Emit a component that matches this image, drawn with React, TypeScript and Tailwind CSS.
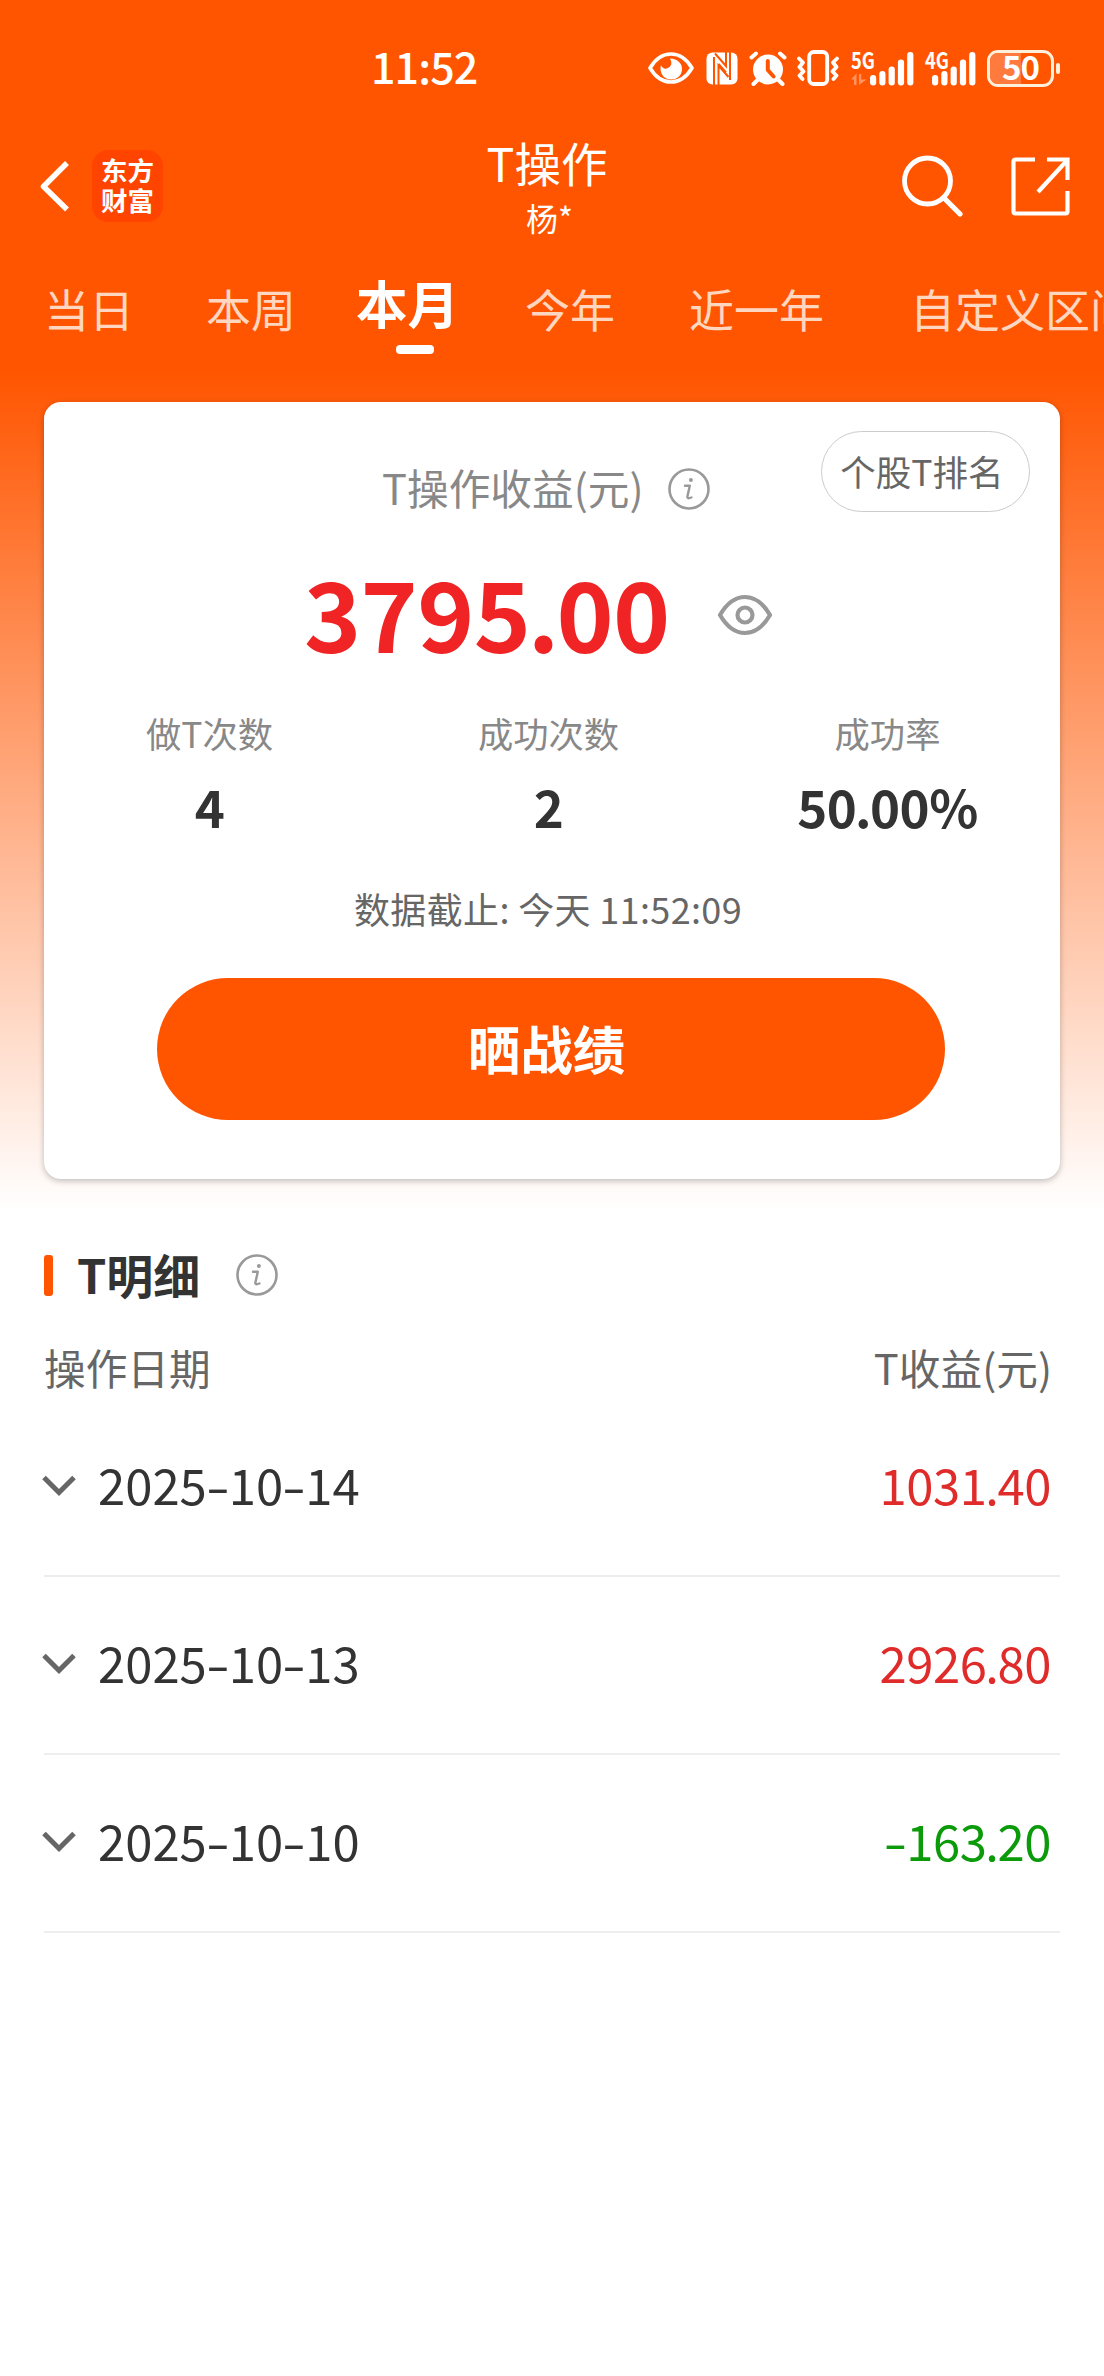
import React from "react";

const tabs = [
  { label: "当日", cls: "ml-[44px]" },
  { label: "本周", cls: "ml-[72px]" },
  { label: "本月", cls: "ml-[60px]", active: true },
  { label: "今年", cls: "ml-[66px]" },
  { label: "近一年", cls: "ml-[74px]" },
  { label: "自定义区间", cls: "ml-[86px]" },
];

const stats = [
  { label: "做T次数", value: "4" },
  { label: "成功次数", value: "2" },
  { label: "成功率", value: "50.00%" },
];

const records = [
  { date: "2025-10-14", amount: "1031.40" },
  { date: "2025-10-13", amount: "2926.80" },
  { date: "2025-10-10", amount: "-163.20" },
];

/* Digits with a widened hyphen and a tightened decimal point */
function Figures({ text }: { text: string }) {
  return (
    <>
      {text.split("").map((ch, i) =>
        ch === "-" ? (
          <span key={i} className="inline-block w-[22px] origin-center scale-x-[1.4] text-center">
            -
          </span>
        ) : ch === "." ? (
          <span key={i} className="mr-[-0.022em] ml-[-0.026em]">
            .
          </span>
        ) : (
          <React.Fragment key={i}>{ch}</React.Fragment>
        )
      )}
    </>
  );
}

function InfoIcon({ className }: { className: string }) {
  return (
    <svg className={className} width="42" height="42" viewBox="0 0 42 42" fill="none" stroke="#999" strokeLinecap="round" strokeLinejoin="round">
      <circle cx="21" cy="21" r="19.5" strokeWidth="2.6" />
      <path d="M17 17.800h4.800l-2.400 10.700c-.4 1.800.8 2.200 4 1" strokeWidth="2.4" />
      <circle cx="22.9" cy="12" r="2" fill="#999" stroke="none" />
    </svg>
  );
}

function Signal({ label, first, data }: { label: string; first: number; data?: boolean }) {
  const tops = [24, 20, 15.5, 8.5, 1];
  return (
    <svg className="overflow-visible" width={first + 44} height="35" viewBox={`0 0 ${first + 44} 35`} fill="#fff">
      <text x="0" y="17.500" fontSize="23" fontWeight="700" textLength="24" lengthAdjust="spacingAndGlyphs" fontFamily="Noto Sans CJK SC, sans-serif">
        {label}
      </text>
      {data && <path d="M0 28.500 5.500 22.500V34H3v-5.500zM8 23h2.300v5.500H15.500L8 34z" fill="#ff9460" />}
      {tops.map((t, i) => (
        <rect key={i} x={first + i * 9.3} y={t} width="6.2" height={34.5 - t} rx="3" />
      ))}
    </svg>
  );
}

function StatusBar() {
  return (
    <div className="flex h-[134px] items-start text-white">
      <div className="ml-[371px] mt-[35px] w-[112px] text-[43px] leading-[60px] font-medium tracking-[-0.9px]">11:52</div>
      <div className="ml-[165px] mt-[50px] flex h-[36px] items-center">
        <svg width="46" height="32" viewBox="0 0 46 32" fill="none">
          <path d="M2 16C8 6 15 2 23 2s15 4 21 14c-6 10-13 14-21 14S8 26 2 16Z" stroke="#fff" strokeWidth="3.6" strokeLinejoin="round" />
          <path d="M22 6.500C30 7 34 11.500 34 17c0 6-4.500 10.500-10.700 10.500C17 27.500 12.500 23 12.500 16.500c0-1.300.2-2.200.5-3.200 1.500 3.200 4 4.200 6.400 3C23.500 14.500 24.500 11 22 6.500Z" fill="#fff" />
        </svg>
        <svg className="ml-[12px]" width="32" height="33" viewBox="0 0 32 33">
          <rect x="0.500" y="0.500" width="31" height="32" rx="6" fill="#fff" />
          <g fill="none" stroke="#ff5500" strokeWidth="2">
            <path d="M8 33V5" />
            <path d="M24 0v28" />
            <path d="M9 1.500 20 14V0" />
            <path d="M12.500 33V13.500L22.500 25" />
            <path d="M12.500 12 20 20.500" />
          </g>
        </svg>
        <svg className="ml-[11px]" width="38" height="35" viewBox="0 0 38 35" fill="none" stroke="#fff" strokeLinecap="round">
          <circle cx="19" cy="18.500" r="15" fill="#fff" stroke="none" />
          <path d="M2.500 6.500 7 2.500M35.500 6.500 31 2.500" strokeWidth="4" />
          <path d="m8.500 29-4 4M29.500 29l4 4" strokeWidth="4" />
          <path d="M18.800 10v9l5.800 6.500" stroke="#ff5500" strokeWidth="4" strokeLinejoin="round" />
        </svg>
        <svg className="ml-[10px]" width="42" height="36" viewBox="0 0 42 36" fill="none" stroke="#fff" strokeWidth="3.800">
          <rect x="12.200" y="2" width="18" height="32" rx="4.500" />
          <path d="m2 8.500 4 4L2.500 17l4 4.500-4 4 3 3.500" strokeLinejoin="round" strokeLinecap="round" />
          <path d="m40 8.500-4 4 3.500 4.500-4 4.500 4 4-3 3.500" strokeLinejoin="round" strokeLinecap="round" />
        </svg>
        <span className="ml-[12px]">
          <Signal label="5G" first={19} data />
        </span>
        <span className="ml-[11px]">
          <Signal label="4G" first={7} />
        </span>
        <div className="relative ml-[11px] flex h-[37px] w-[67px] items-center justify-center rounded-[11px] border-[3px] border-[#fff0dc]">
          <div className="absolute inset-y-0 left-0 w-1/2 rounded-l-[8px] bg-[#ff7a3d]" />
          <span className="relative mt-[-4px] text-[33px] leading-[36px] font-bold tracking-[-1px]">50</span>
        </div>
        <div className="ml-[2px] h-[11px] w-[4px] rounded-[2px] bg-[#fff0dc]" />
      </div>
    </div>
  );
}

function Header() {
  return (
    <div className="flex h-[104px] items-center text-white">
      <svg className="ml-[39px]" width="31" height="52" viewBox="0 0 31 52" fill="none" stroke="#fff" strokeWidth="5.500">
        <path d="M28 3 4.500 26.500 28 49.500" strokeLinejoin="round" />
      </svg>
      <div className="ml-[22px] h-[72px] w-[71px] rounded-[16px] bg-[#ff4400] px-[9px] pt-[5px] text-[26.500px] leading-[30px] font-bold break-all">
        东方财富
      </div>
      <div className="ml-[264px] w-[240px] self-start text-center">
        <div className="text-[46.5px] leading-[56px]">T操作</div>
        <div className="mt-[5px] ml-[5px] text-[32px] leading-[44px]">杨*</div>
      </div>
      <svg className="ml-[234px]" width="62" height="62" viewBox="0 0 62 62" fill="none" stroke="#fff">
        <circle cx="26.500" cy="26" r="23" strokeWidth="4.800" />
        <path d="M42.500 42.500 59 59" strokeWidth="5.200" strokeLinecap="round" />
      </svg>
      <svg className="ml-[47px]" width="60" height="60" viewBox="0 0 60 60" fill="none" stroke="#fff" strokeWidth="4.200">
        <path d="M25 3.500H5.500a2 2 0 0 0-2 2v50a2 2 0 0 0 2 2h50a2 2 0 0 0 2-2V35" />
        <path d="M37 3.500h20.500V24" />
        <path d="M56.500 5 28 36" />
      </svg>
    </div>
  );
}

function Tabs() {
  return (
    <div className="flex h-[164px] items-start overflow-hidden whitespace-nowrap">
      {tabs.map((t) =>
        t.active ? (
          <div key={t.label} className={`${t.cls} mt-[34px] flex shrink-0 flex-col items-center text-[51.5px] leading-[60px] font-bold text-white`}>
            {t.label}
            <div className="ml-[14px] mt-[13px] h-[9px] w-[38px] rounded-[4px] bg-white" />
          </div>
        ) : (
          <div key={t.label} className={`${t.cls} mt-[41px] shrink-0 text-[45px] leading-[60px] text-[#ffd6c0]`}>
            {t.label}
          </div>
        )
      )}
    </div>
  );
}

function SummaryCard() {
  return (
    <section className="relative mx-[44px] flex h-[777px] flex-col rounded-[17px] bg-white pt-[55px] shadow-[0_2px_6px_rgba(0,0,0,0.25)]">
      <button className="absolute top-[29px] right-[30px] flex h-[81px] w-[209px] justify-center rounded-full border-[1.5px] border-[#ccc] pr-[7px] text-[35.5px] leading-[77px] text-[#666]">
        个股T排名
      </button>
      <div className="ml-[338px] flex items-center text-[41.7px] leading-[60px] text-[#888]">
        T操作收益(元)
        <InfoIcon className="ml-[24px] mt-[4px]" />
      </div>
      <div className="ml-[260px] mt-[44px] flex items-center">
        <span className="w-[365px] text-[97px] leading-[100px] font-bold tracking-[-0.007em] text-[#f02424]">
          <Figures text="3795.00" />
        </span>
        <svg className="ml-[48px] mt-[8px]" width="56" height="42" viewBox="0 0 56 42" fill="none" stroke="#999" strokeWidth="4.200">
          <path d="M3 21C10 9 18 3 28 3s18 6 25 18c-7 12-15 18-25 18S10 33 3 21Z" strokeLinejoin="round" />
          <circle cx="28" cy="21" r="7.500" />
        </svg>
      </div>
      <div className="mr-[3px] mt-[47px] ml-[-4px] grid grid-cols-3 text-center">
        {stats.map((s) => (
          <div key={s.label}>
            <div className="text-[35.3px] leading-[50px] text-[#888]">{s.label}</div>
            <div className="mt-[18px] text-[51px] leading-[60px] font-bold tracking-[-0.01em] text-[#333]">
              <Figures text={s.value} />
            </div>
          </div>
        ))}
      </div>
      <div className="mt-[47px] pr-[8px] text-center text-[36px] leading-[50px] tracking-[0.35px] text-[#666]">数据截止: 今天 11:52:09</div>
      <button className="ml-[113px] mt-[45px] h-[142px] w-[788px] rounded-full bg-[#ff5500] pr-[9px] pb-[4px] text-[52.500px] font-bold text-white">
        晒战绩
      </button>
    </section>
  );
}

function Details() {
  return (
    <section className="mx-[44px] mt-[66px]">
      <div className="flex h-[60px] items-center">
        <div className="h-[41px] w-[9px] rounded-[3px] bg-[#ff5500]" />
        <h2 className="ml-[24px] pb-[3px] text-[47px] leading-[56px] font-bold text-[#333]">T明细</h2>
        <InfoIcon className="ml-[36px]" />
      </div>
      <div className="mt-[32px] flex justify-between pr-[8px] text-[41.7px] leading-[60px] text-[#666]">
        <span>操作日期</span>
        <span>T收益(元)</span>
      </div>
      <ul className="mt-[2px]">
        {records.map((r) => (
          <li key={r.date} className="flex h-[178px] items-center border-b-2 border-[#eee] text-[49px] leading-[60px]">
            <svg className="ml-[-2px] mt-[-2px]" width="34" height="22" viewBox="0 0 34 22" fill="none" stroke="#666" strokeWidth="5">
              <path d="m2 2.500 15 15 15-15" />
            </svg>
            <span className="ml-[22px] pb-[6px] text-[#333]">
              <Figures text={r.date} />
            </span>
            <span className={`mr-[9px] ml-auto pb-[6px] tracking-[-0.009em] ${r.amount.startsWith("-") ? "text-[#0a9a0a]" : "text-[#e02b2b]"}`}>
              <Figures text={r.amount} />
            </span>
          </li>
        ))}
      </ul>
    </section>
  );
}

export default function App() {
  return (
    <main className="h-[2376px] w-[1104px] overflow-hidden bg-[linear-gradient(to_bottom,#ff5500_0,#ff5500_370px,#ffffff_1210px)] font-['Noto_Sans_CJK_SC',sans-serif]">
      <StatusBar />
      <Header />
      <Tabs />
      <SummaryCard />
      <Details />
    </main>
  );
}
